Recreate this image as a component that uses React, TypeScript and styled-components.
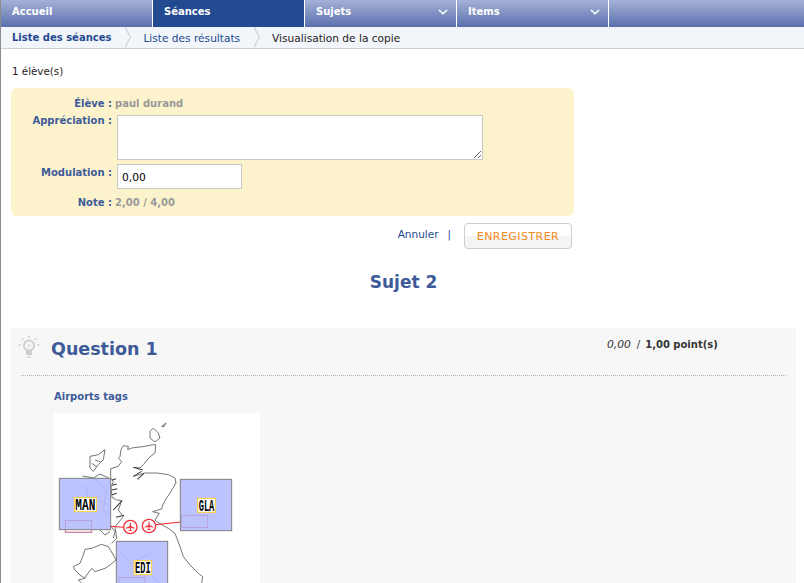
import React from 'react';
import styled, {createGlobalStyle} from 'styled-components';

const GlobalStyle = createGlobalStyle`
    html, body {
        margin: 0;
        padding: 0;
        height: 100%;
        overflow: hidden;
        background: white;
        font-family: "DejaVu Sans", Verdana, sans-serif;
        font-size: 10.3px;
        color: #222;
    }
`;

const Page = styled.div`
    height: 583px;
    overflow: hidden;
    border-left: 1px solid #8c8c8c;
`;

const Nav = styled.nav`
    display: flex;
    height: 27px;
    background: linear-gradient(#a5b0d5, #5a70ae);
`;

const NavItem = styled.div<{active?: boolean}>`
    box-sizing: border-box;
    width: 152px;
    display: flex;
    align-items: center;
    justify-content: space-between;
    padding: 0 8px 4px 11px;
    color: white;
    font-weight: bold;
    font-size: 10px;
    border-right: 1px solid white;
    background: ${({active}) => active ? '#234a90' : 'transparent'};
`;

const Crumbs = styled.div`
    display: flex;
    align-items: center;
    height: 21px;
    background: #f2f5fa;
    border-bottom: 1px solid #cfcfd2;
    padding-left: 11px;
    color: #234a90;
`;

const Crumb = styled.span<{current?: boolean; strong?: boolean}>`
    font-size: ${({strong}) => strong ? '10px' : '10.6px'};
    font-weight: ${({strong}) => strong ? 'bold' : 'normal'};
    color: ${({current}) => current ? '#222' : '#234a90'};
`;

const CrumbSep = styled.svg`
    width: 6px;
    height: 21px;
    margin: 0 12px 0 14px;
    flex: none;
`;

const Content = styled.main`
    padding: 15px 7px 0 10px;
`;

const Count = styled.div`
    height: 24px;
    line-height: 14px;
    padding-left: 1px;
`;

const FormPanel = styled.div`
    box-sizing: border-box;
    width: 563px;
    height: 128px;
    background: #fcf3cd;
    border-radius: 6px;
    padding: 9px 0 0;
    display: flex;
    flex-direction: column;
`;

const Row = styled.div<{mt?: number}>`
    display: flex;
    gap: 5px;
    margin-top: ${({mt}) => mt ?? 0}px;
`;

const Label = styled.div<{offset?: number}>`
    width: 101px;
    margin-top: ${({offset}) => offset ?? 0}px;
    text-align: right;
    color: #3d5a99;
    font-weight: bold;
    font-size: 10px;
    line-height: 14px;
    flex: none;
`;

const Value = styled.div`
    margin-left: -2px;
    color: #999;
    font-weight: bold;
    font-size: 10px;
    line-height: 14px;
`;

const Remark = styled.textarea`
    box-sizing: border-box;
    width: 366px;
    height: 45px;
    border: 1px solid #c8c8c8;
    background: white;
    margin: 0;
    padding: 2px;
    display: block;
`;

const Modulation = styled.input`
    box-sizing: border-box;
    width: 125px;
    height: 25px;
    border: 1px solid #c8c8c8;
    background: white;
    margin: 0;
    padding: 1px 0 0 4px;
    font-family: "DejaVu Sans", Verdana, sans-serif;
    font-size: 10.7px;
    color: #000;
`;

const Actions = styled.div`
    width: 563px;
    display: flex;
    justify-content: flex-end;
    align-items: flex-start;
    padding: 7px 2px 0 0;
    box-sizing: border-box;
    color: #234a90;
`;

const CancelLink = styled.a`
    margin-top: 5px;
    font-size: 10.5px;
`;

const Divider = styled.span`
    margin: 5px 13px 0 9px;
`;

const SaveButton = styled.button`
    box-sizing: border-box;
    width: 108px;
    height: 26px;
    border: 1px solid #cdcdcd;
    border-radius: 4px;
    background: linear-gradient(#fff 50%, #f4f4f4 50%);
    color: #f28a1a;
    font-family: "DejaVu Sans", Verdana, sans-serif;
    font-size: 11px;
    padding: 0;
    letter-spacing: 0.45px;
`;

const SubjectTitle = styled.h1`
    width: 785px;
    height: 59px;
    margin: 20px 0 0;
    text-align: center;
    color: #3d5a99;
    font-size: 17px;
    line-height: 26px;
`;

const QuestionCard = styled.section`
    box-sizing: border-box;
    width: 785px;
    height: 300px;
    background: #f7f7f7;
    padding: 0 10px;
`;

const QuestionHead = styled.header`
    height: 47px;
    display: flex;
    border-bottom: 1px dotted #b5b5b5;
`;

const BulbIcon = styled.svg`
    width: 22px;
    height: 24px;
    margin: 7px 0 0 -3px;
    flex: none;
`;

const QuestionTitle = styled.h2`
    margin: 7px 0 0 11px;
    color: #3d5a99;
    font-size: 17.5px;
    line-height: 28px;
    font-weight: bold;
`;

const Score = styled.div`
    margin: 10px 0 0 auto;
    width: 179px;
    line-height: 13px;
    font-size: 10px;
    font-weight: bold;
    color: #333;
`;

const ScoreGot = styled.em`
    font-size: 10.7px;
    font-weight: normal;
    margin-right: 6px;
`;

const ScoreSlash = styled.span`
    font-weight: normal;
    margin-right: 5px;
`;

const QuestionBody = styled.div`
    padding: 14px 0 0 33px;
`;

const ItemTitle = styled.div`
    color: #3d5a99;
    font-weight: bold;
    font-size: 10px;
    line-height: 14px;
    margin-bottom: 9px;
`;

const MapFrame = styled.svg`
    display: block;
    width: 206px;
    height: 170px;
    background: white;
`;

const Coast = styled.path<{heavy?: boolean}>`
    fill: none;
    stroke: ${({heavy}) => heavy ? '#3a3a3a' : '#5f5f5f'};
    stroke-width: ${({heavy}) => heavy ? 3.2 : 2.6};
    stroke-linejoin: round;
`;

const TagBox = styled.rect`
    fill: #b4bbff;
    fill-opacity: 0.88;
    stroke: #808080;
    stroke-width: 3;
`;

const TagInner = styled.rect`
    fill: none;
    stroke: #b29ccf;
    stroke-width: 2.4;
`;

const TagLabelBg = styled.rect`
    fill: white;
    stroke: #ffcf2e;
    stroke-width: 3;
`;

const TagLabel = styled.text`
    font-family: "Liberation Mono", monospace;
    font-size: 50px;
    font-weight: bold;
    fill: #000;
    text-anchor: middle;
`;

const Leader = styled.path`
    fill: none;
    stroke: #f0222c;
    stroke-width: 3;
`;

const Chevron = () => (
    <svg width="10" height="6" viewBox="0 0 10 6">
        <path d="M0.8 0.8 L5 4.6 L9.2 0.8" fill="none" stroke="#eaf6fa" strokeWidth="1.6" />
    </svg>
);

const Separator = () => (
    <CrumbSep viewBox="0 0 6 21">
        <path d="M0.5 0 Q1.5 4 5.5 10 Q1.5 16 0.5 20.5" fill="none" stroke="#c4c6cc" strokeWidth="1" />
    </CrumbSep>
);

const Bulb = () => (
    <BulbIcon viewBox="0 0 22 24">
        <circle cx="11" cy="10.5" r="5" fill="none" stroke="#cfcfcf" strokeWidth="2" />
        <circle cx="11" cy="10.5" r="1.6" fill="#dedede" />
        <path d="M8 15 L8 20 L14 20 L14 15 Z" fill="#cdcdcd" />
        <path d="M9 22 L13 22" stroke="#d6d6d6" strokeWidth="1.6" />
        <g fill="#d0d0d0">
            <circle cx="11" cy="1.5" r="1.1" />
            <circle cx="4.5" cy="4" r="1.1" />
            <circle cx="17.5" cy="4" r="1.1" />
            <circle cx="1.5" cy="10" r="1.1" />
            <circle cx="20.5" cy="10" r="1.1" />
        </g>
    </BulbIcon>
);

const Plane = ({x, y}: {x: number; y: number}) => (
    <g transform={`translate(${x} ${y})`}>
        <circle r="20" fill="white" fillOpacity="0.6" stroke="#f0353f" strokeWidth="4" />
        <path d="M-1.5 -13 L1.5 -13 L2 -3 L13 2 L13 5 L2 2 L1.5 8 L5 11 L5 13 L0 12 L-5 13 L-5 11 L-1.5 8 L-2 2 L-13 5 L-13 2 L-2 -3 Z" fill="#f0353f" />
    </g>
);

const Tag = ({x, y, text, lx, ly, ix, iy}: {x: number; y: number; text: string; lx: number; ly: number; ix: number; iy: number}) => {
    const labelWidth = text === 'MAN' ? 66 : 53;
    return (
        <>
            <TagBox x={x} y={y} width={154} height={154} />
            <TagInner x={ix} y={iy} width={78} height={36} />
            <TagLabelBg x={lx} y={ly} width={labelWidth} height={42} />
            <TagLabel x={lx + labelWidth / 2} y={ly + 37} textLength={labelWidth - 6} lengthAdjust="spacingAndGlyphs">{text}</TagLabel>
        </>
    );
};

const AirportMap = () => (
    <MapFrame viewBox="12 9 618 510">
        {/* coast traced on the 3x crops, coords are crop coords */}
        <Coast d="M213 119 L220 107 L235 109 L233 119 L245 114 L285 109 L310 104 L317 104 L315 129 L298 142 L280 164 L270 174 L252 172" />
        <Coast d="M250 199 L285 189 L320 189 L355 194 L375 204 L378 219 L360 249 L350 264 L338 285 L335 297 L308 305 L328 310 L315 330 L320 335 L355 355 L375 370 L390 410 L400 440 L420 465 L445 490 L458 500 L455 519" />
        <Coast d="M213 119 L210 139 L205 144 L215 154 L205 169 L182 176 L182 204 L190 215 L183 230 L186 262 L200 270 L215 272 L205 300 L220 320 L195 350 L200 385 L185 400" />
        <Coast heavy d="M250 172 L278 180 M250 199 L275 184 M262 208 L282 190" />
        <Coast heavy d="M186 210 L198 206 M186 226 L200 222 M186 240 L202 236 M186 254 L200 250 M190 300 L216 272 M198 322 L222 316" />
        <Coast d="M120 139 L145 134 L165 119 L160 149 L145 164 L130 184 L120 174 Z" />
        <Coast d="M135 150 L150 155 M125 160 L140 170" />
        <Coast d="M300 64 L310 54 L325 69 L330 84 L315 96 L300 84 Z" />
        <Coast d="M335 49 L348 39 L342 50 Z" />
        <Coast d="M98 198 L130 204 L150 192 L178 205" />
        <Coast d="M70 470 L90 460 L100 435 L105 418 L125 415 L155 403 L175 410 L190 435 L198 450 L180 465 L165 475 L135 485 L125 475 L110 495 L105 505 L90 495 L75 480 Z" />
        <Coast d="M105 505 L85 510 L95 519" />
        <Coast d="M150 360 L165 375 L180 365 M180 345 L195 365 L190 385" />
        <Coast d="M105 225 L115 260 M135 205 L170 240 L160 300 L178 320 M150 270 L175 285" />
        <Coast d="M215 430 L245 460 L300 430 M300 490 L325 519" />
        <Leader d="M182 349 L222 352" />
        <Leader d="M46 358 L46 367 L125 367 L125 358" />
        <Leader d="M318 344 L392 336" />
        <Tag x={28} y={205} text="MAN" lx={73} ly={263} ix={46} iy={331} />
        <Tag x={391} y={208} text="GLA" lx={443} ly={265} ix={395} iy={316} />
        <Tag x={199} y={394} text="EDI" lx={252} ly={452} ix={207} iy={503} />
        <Plane x={241} y={351} />
        <Plane x={297} y={348} />
    </MapFrame>
);

export default function App() {
    return (
        <Page>
            <GlobalStyle />
            <Nav>
                <NavItem>Accueil</NavItem>
                <NavItem active>Séances</NavItem>
                <NavItem>Sujets<Chevron /></NavItem>
                <NavItem>Items<Chevron /></NavItem>
            </Nav>
            <Crumbs>
                <Crumb strong>Liste des séances</Crumb>
                <Separator />
                <Crumb>Liste des résultats</Crumb>
                <Separator />
                <Crumb current>Visualisation de la copie</Crumb>
            </Crumbs>
            <Content>
                <Count>1 élève(s)</Count>
                <FormPanel>
                    <Row>
                        <Label>Élève :</Label>
                        <Value>paul durand</Value>
                    </Row>
                    <Row mt={4}>
                        <Label offset={-1}>Appréciation :</Label>
                        <Remark />
                    </Row>
                    <Row mt={4}>
                        <Label offset={2}>Modulation :</Label>
                        <Modulation defaultValue="0,00" />
                    </Row>
                    <Row mt={7}>
                        <Label>Note :</Label>
                        <Value>2,00 / 4,00</Value>
                    </Row>
                </FormPanel>
                <Actions>
                    <CancelLink>Annuler</CancelLink>
                    <Divider>|</Divider>
                    <SaveButton>ENREGISTRER</SaveButton>
                </Actions>
                <SubjectTitle>Sujet 2</SubjectTitle>
                <QuestionCard>
                    <QuestionHead>
                        <Bulb />
                        <QuestionTitle>Question 1</QuestionTitle>
                        <Score>
                            <ScoreGot>0,00</ScoreGot>
                            <ScoreSlash>/</ScoreSlash>
                            1,00 point(s)
                        </Score>
                    </QuestionHead>
                    <QuestionBody>
                        <ItemTitle>Airports tags</ItemTitle>
                        <AirportMap />
                    </QuestionBody>
                </QuestionCard>
            </Content>
        </Page>
    );
}
